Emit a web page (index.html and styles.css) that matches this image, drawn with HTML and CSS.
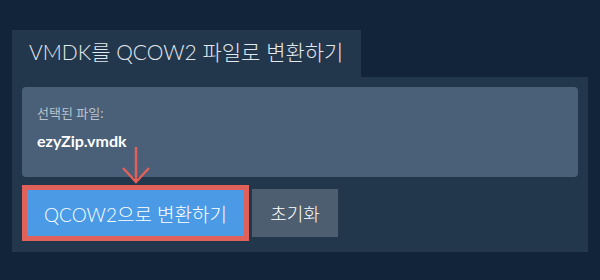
FILE: index.html
```html
<!DOCTYPE html>
<html lang="ko">
<head>
<meta charset="utf-8">
<link rel="stylesheet" href="styles.css">
</head>
<body>
<div class="wrap">
  <div class="tab">VMDK를 QCOW2 파일로 변환하기</div>
  <div class="panel">
    <div class="file-box">
      <div class="label">선택된 파일:</div>
      <div class="name">ezyZip.vmdk</div>
    </div>
    <div class="actions">
      <div class="convert-wrap">
        <svg class="arrow" width="30" height="38" viewBox="0 0 30 38">
          <path d="M15 0 V35 M2 21 L15 35 L28 21" fill="none" stroke="#e0605a" stroke-width="2.5"/>
        </svg>
        <button class="convert">QCOW2으로 변환하기</button>
      </div>
      <button class="reset">초기화</button>
    </div>
  </div>
</div>
</body>
</html>
```

FILE: styles.css
```css
html, body {
  margin: 0;
  padding: 0;
  background: #11243a;
  width: 600px;
  height: 280px;
  overflow: hidden;
  font-family: Lato, "Noto Sans CJK KR", sans-serif;
}
.wrap {
  padding: 30px 12px 0 12px;
}
.tab {
  background: #22364c;
  color: #e3e8ee;
  font-size: 21px;
  font-weight: 300;
  height: 47px;
  line-height: 44px;
  padding: 0 0 0 17px;
  width: 332px;
  white-space: nowrap;
  overflow: hidden;
}
.panel {
  background: #22364c;
  height: 175px;
  padding: 10px;
  box-sizing: border-box;
}
.file-box {
  background: #4a5f78;
  border-radius: 4px;
  height: 90px;
  padding: 17px 15px 0 15px;
  box-sizing: border-box;
}
.label {
  color: #b8c2cd;
  font-size: 13px;
  line-height: 18px;
}
.name {
  color: #ffffff;
  font-weight: bold;
  font-size: 16px;
  line-height: 20px;
  margin-top: 9px;
}
.actions {
  display: flex;
  align-items: center;
  gap: 3px;
  margin-top: 8px;
}
.convert-wrap {
  position: relative;
}
.arrow {
  position: absolute;
  left: 99px;
  top: -38px;
}
button {
  font-family: Lato, "Noto Sans CJK KR", sans-serif;
  color: #ffffff;
  border: none;
  font-size: 18px;
  font-weight: 300;
  cursor: pointer;
}
.convert {
  background: #4a9ae6;
  border: 5px solid #e0605a;
  width: 227px;
  height: 56px;
  padding: 0;
  font-size: 19px;
}
.reset {
  background: #4d5e70;
  width: 86px;
  height: 48px;
  padding: 0;
}
```
